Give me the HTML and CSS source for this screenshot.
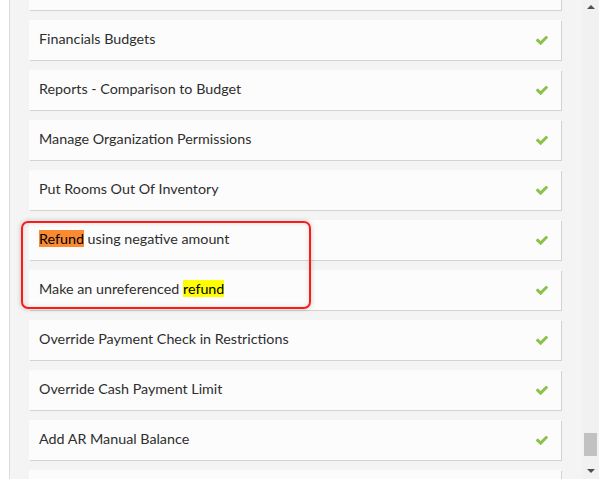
FILE: index.html
```html
<!DOCTYPE html>
<html>
<head>
<meta charset="utf-8">
<link rel="stylesheet" href="styles.css">
</head>
<body>
<div class="panel">
  <div class="viewport">
    <ul class="list">
      <li class="card"></li>
      <li class="card"><span class="label">Financials Budgets</span><svg class="check" viewBox="121 430 1550 1030"><path d="M1671 566q0 40-28 68l-724 724-136 136q-28 28-68 28t-68-28l-136-136-362-362q-28-28-28-68t28-68l136-136q28-28 68-28t68 28l294 295 656-657q28-28 68-28t68 28l136 136q28 28 28 68z"/></svg></li>
      <li class="card"><span class="label">Reports - Comparison to Budget</span><svg class="check" viewBox="121 430 1550 1030"><path d="M1671 566q0 40-28 68l-724 724-136 136q-28 28-68 28t-68-28l-136-136-362-362q-28-28-28-68t28-68l136-136q28-28 68-28t68 28l294 295 656-657q28-28 68-28t68 28l136 136q28 28 28 68z"/></svg></li>
      <li class="card"><span class="label">Manage Organization Permissions</span><svg class="check" viewBox="121 430 1550 1030"><path d="M1671 566q0 40-28 68l-724 724-136 136q-28 28-68 28t-68-28l-136-136-362-362q-28-28-28-68t28-68l136-136q28-28 68-28t68 28l294 295 656-657q28-28 68-28t68 28l136 136q28 28 28 68z"/></svg></li>
      <li class="card"><span class="label">Put Rooms Out Of Inventory</span><svg class="check" viewBox="121 430 1550 1030"><path d="M1671 566q0 40-28 68l-724 724-136 136q-28 28-68 28t-68-28l-136-136-362-362q-28-28-28-68t28-68l136-136q28-28 68-28t68 28l294 295 656-657q28-28 68-28t68 28l136 136q28 28 28 68z"/></svg></li>
      <li class="card"><span class="label"><mark class="hl-orange">Refund</mark> using negative amount</span><svg class="check" viewBox="121 430 1550 1030"><path d="M1671 566q0 40-28 68l-724 724-136 136q-28 28-68 28t-68-28l-136-136-362-362q-28-28-28-68t28-68l136-136q28-28 68-28t68 28l294 295 656-657q28-28 68-28t68 28l136 136q28 28 28 68z"/></svg></li>
      <li class="card"><span class="label">Make an unreferenced <mark class="hl-yellow">refund</mark></span><svg class="check" viewBox="121 430 1550 1030"><path d="M1671 566q0 40-28 68l-724 724-136 136q-28 28-68 28t-68-28l-136-136-362-362q-28-28-28-68t28-68l136-136q28-28 68-28t68 28l294 295 656-657q28-28 68-28t68 28l136 136q28 28 28 68z"/></svg></li>
      <li class="card"><span class="label">Override Payment Check in Restrictions</span><svg class="check" viewBox="121 430 1550 1030"><path d="M1671 566q0 40-28 68l-724 724-136 136q-28 28-68 28t-68-28l-136-136-362-362q-28-28-28-68t28-68l136-136q28-28 68-28t68 28l294 295 656-657q28-28 68-28t68 28l136 136q28 28 28 68z"/></svg></li>
      <li class="card"><span class="label">Override Cash Payment Limit</span><svg class="check" viewBox="121 430 1550 1030"><path d="M1671 566q0 40-28 68l-724 724-136 136q-28 28-68 28t-68-28l-136-136-362-362q-28-28-28-68t28-68l136-136q28-28 68-28t68 28l294 295 656-657q28-28 68-28t68 28l136 136q28 28 28 68z"/></svg></li>
      <li class="card"><span class="label">Add AR Manual Balance</span><svg class="check" viewBox="121 430 1550 1030"><path d="M1671 566q0 40-28 68l-724 724-136 136q-28 28-68 28t-68-28l-136-136-362-362q-28-28-28-68t28-68l136-136q28-28 68-28t68 28l294 295 656-657q28-28 68-28t68 28l136 136q28 28 28 68z"/></svg></li>
      <li class="card"></li>
    </ul>
    <div class="annotation"></div>
  </div>
  <div class="scrollbar">
    <span class="arrow up"></span>
    <div class="track"><div class="thumb"></div></div>
    <span class="arrow down"></span>
  </div>
</div>
</body>
</html>
```
FILE: styles.css
```css
html, body {
  margin: 0;
  padding: 0;
  background: #ffffff;
}
body {
  font-family: "Source Sans Pro", Lato, "Noto Sans", sans-serif;
  color: #2e2e2e;
}
.panel {
  margin-left: 9px;
  width: 590px;
  height: 479px;
  display: flex;
  border-left: 1px solid #dcdcdc;
  box-sizing: border-box;
}
.viewport {
  position: relative;
  flex: 1;
  background: #f4f4f4;
  overflow: hidden;
}
.list {
  list-style: none;
  margin: -30px 0 0 0;
  padding: 0 20px 0 19px;
  display: flex;
  flex-direction: column;
  gap: 9px;
}
.card {
  height: 40px;
  box-sizing: border-box;
  background: #fcfcfc;
  box-shadow: 1px 1px 0 #d2d2d2;
  margin-right: 1px;
  margin-bottom: 1px;
  display: flex;
  align-items: center;
  justify-content: space-between;
  padding: 0 13px 3px 10px;
  font-size: 14.3px;
}
.label {
  white-space: nowrap;
}
mark {
  color: #000;
  padding: 0;
}
.hl-orange {
  background: #fb8b33;
}
.hl-yellow {
  background: #ffff00;
}
.check {
  width: 12px;
  height: 9px;
  margin-top: 3px;
  fill: #8bc34a;
}
.annotation {
  position: absolute;
  left: 11px;
  top: 221px;
  width: 290px;
  height: 88px;
  box-sizing: border-box;
  border: 2px solid #ff1a1a;
  border-radius: 7px;
  box-shadow: 0 0 5px rgba(0,0,0,0.22), inset 0 0 5px rgba(0,0,0,0.12);
}
.scrollbar {
  width: 17px;
  background: #f1f1f1;
  display: flex;
  flex-direction: column;
  align-items: center;
}
.arrow {
  width: 0;
  height: 0;
  border-left: 4px solid transparent;
  border-right: 4px solid transparent;
}
.arrow.up {
  margin-top: 5px;
  border-bottom: 4px solid #505050;
}
.arrow.down {
  margin-bottom: 6px;
  border-top: 4px solid #505050;
}
.track {
  flex: 1;
  width: 100%;
  display: flex;
  flex-direction: column;
  align-items: center;
  justify-content: flex-end;
  padding-bottom: 13px;
}
.thumb {
  width: 13px;
  height: 23px;
  background: #c1c1c1;
}
```
